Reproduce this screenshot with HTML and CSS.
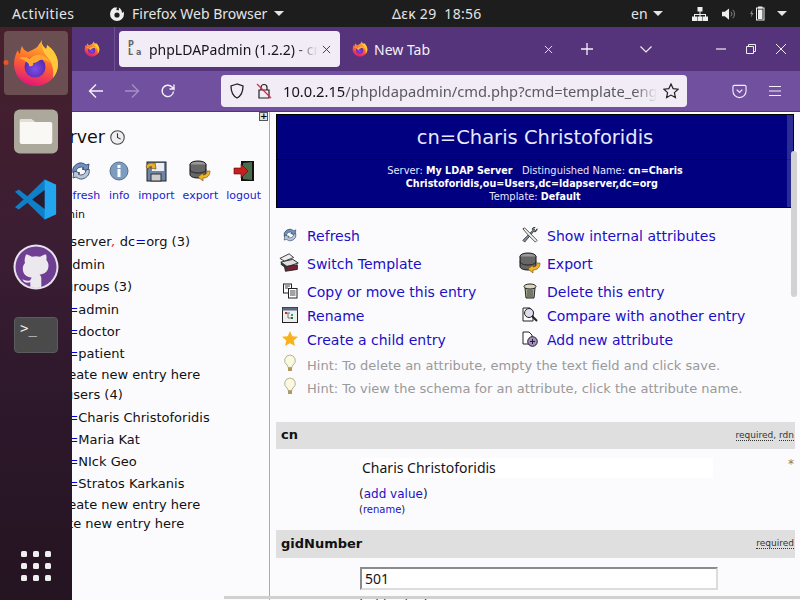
FILE: index.html
```html
<!DOCTYPE html>
<html lang="en">
<head>
<meta charset="utf-8">
<title>phpLDAPadmin</title>
<link rel="stylesheet" href="styles.css">
</head>
<body>
<header class="topbar">
  <span class="activities">Activities</span>
  <span class="appmenu">
    <svg class="app-ico" viewBox="0 0 16 16"><path d="M8 1a7 7 0 1 0 7 7c0-1-.3-2-.7-2.800-.2 1-.7 1.500-1.300 1.800.1-2-.8-4.500-3.500-5.500.8 1.200.6 2.300 0 3a3 3 0 0 0-2.500-.2c.8-.9 1-1.800.5-3.300z" fill="#eee"/><circle cx="8" cy="9" r="2.600" fill="#1d1d1d"/></svg>
    Firefox Web Browser <i class="caret"></i>
  </span>
  <span class="clock">Δεκ 29&nbsp;&nbsp;18:56</span>
  <span class="status">
    <span class="lang">en <i class="caret"></i></span>
    <svg class="st-net" viewBox="0 0 16 14"><path d="M5.500 0h5v4.500h-5zM0 9.500h5V14H0zM5.500 9.500h5V14h-5zM11 9.500h5V14h-5zM7.500 4.500h1V7H14v2.500h-1V8H8.500v1.500h-1V8H3v1.500H2V7h5.500z" fill="#eee"/></svg>
    <svg class="st-vol" viewBox="0 0 16 14"><path d="M0 4.500h3L7.500 1v12L3 9.500H0z" fill="#eee"/><path d="M9.500 4.500a3.500 3.500 0 0 1 0 5M11.500 2.500a6.500 6.500 0 0 1 0 9" stroke="#888" fill="none"/></svg>
    <svg class="st-bat" viewBox="0 0 16 14"><path d="M2.500 3 0 7.500h1.500L1 11l2.500-4.500H2z" fill="#888"/><rect x="6.500" y="1.500" width="7.500" height="12" fill="none" stroke="#eee"/><rect x="8" y="0" width="4.500" height="2" fill="#eee"/><rect x="8" y="3" width="4.500" height="9.500" fill="#eee"/></svg>
    <i class="caret caret-end"></i>
  </span>
</header>

<div class="desktop">
  <nav class="dock">
    <div class="dock-item active">
      <i class="run-dot"></i>
      <svg class="fx-big" viewBox="0 0 48 48"><use href="#fx"/></svg>
    </div>
    <div class="dock-item">
      <svg class="files-ico" viewBox="0 0 46 46"><rect width="46" height="46" rx="6" fill="#aca89b"/><path d="M6 12a2 2 0 0 1 2-2h10l4 3h16a2 2 0 0 1 2 2v19a2 2 0 0 1-2 2H8a2 2 0 0 1-2-2z" fill="#f9f8f4"/><path d="M6 12a2 2 0 0 1 2-2h10l4 3H6z" fill="#e1dfd6"/></svg>
    </div>
    <div class="dock-item">
      <svg class="code-ico" viewBox="0 0 46 44"><path d="M32 1 44 6.500v31L32 43 14 25.500 5 32.500 1 30l9-8-9-8 4-2.500 9 7z" fill="#0f7fc8"/><path d="M32 1 44 6.500v31L32 43z" fill="#22a6f0"/><path d="M32 12v20L19 22z" fill="#2b1a2e"/></svg>
    </div>
    <div class="dock-item">
      <svg class="gh-ico" viewBox="0 0 46 46"><circle cx="23" cy="23" r="22.500" fill="#e8e3ea"/><circle cx="23" cy="23" r="20.500" fill="#6e3f92"/><path d="M13 10.500c2 0 4 1 6 2.300a16 16 0 0 1 8 0c2-1.300 4-2.300 6-2.300.7 2 .8 4 .3 5.500 1.500 1.700 2.200 3.500 2.200 5.500 0 6-3.500 8.500-9 9.200 1.300.8 1.800 2 1.800 3.500v9a20 20 0 0 1-11 0v-5c-3.500 1-6.500.5-8-3 1.500.5 3.500 1.500 5 1.500 1 0 2.300 0 3-.5.100-1 .6-1.800 1.500-2.500-5.500-.7-9-3.200-9-9.200 0-2 .7-3.800 2.200-5.500-.5-1.500-.4-3.500 0-5.500z" fill="#ece9ee"/></svg>
    </div>
    <div class="dock-item">
      <div class="term-ico"><span>&gt;_</span></div>
    </div>
    <div class="dock-grid">
      <i></i><i></i><i></i><i></i><i></i><i></i><i></i><i></i><i></i>
    </div>
  </nav>

  <main class="browser">
    <div class="tabbar">
      <div class="pinned"><svg class="fx-small" viewBox="0 0 48 48"><use href="#fx"/></svg></div>
      <div class="tab tab-on">
        <span class="favicon-pla"><b>P</b><b></b><b>L</b><b>a</b></span>
        <span class="tab-title">phpLDAPadmin (1.2.2) - cn=Charis</span>
        <svg class="tab-x" viewBox="0 0 10 10"><path d="M1 1l8 8M9 1l-8 8" stroke="#333" fill="none"/></svg>
      </div>
      <div class="tab tab-off">
        <svg class="fx-small" viewBox="0 0 48 48"><use href="#fx"/></svg>
        <span class="tab-title-off">New Tab</span>
        <svg class="tab-x" viewBox="0 0 10 10"><path d="M1 1l8 8M9 1l-8 8" stroke="#eee" fill="none"/></svg>
      </div>
      <svg class="tb-plus" viewBox="0 0 12 12"><path d="M6 0v12M0 6h12" stroke="#f4f0f8" stroke-width="1.300" fill="none"/></svg>
      <svg class="tb-chev" viewBox="0 0 12 7"><path d="M.5.500 6 6l5.500-5.500" stroke="#eee" stroke-width="1.200" fill="none"/></svg>
      <svg class="wc wc-min" viewBox="0 0 10 10"><path d="M0 5h10" stroke="#eee" stroke-width="1.200"/></svg>
      <svg class="wc wc-max" viewBox="0 0 10 10"><path d="M.5 2.500h7v7h-7zM2.500 2.500V.5h7v7h-2" stroke="#eee" fill="none"/></svg>
      <svg class="wc wc-close" viewBox="0 0 10 10"><path d="M0 0l10 10M10 0 0 10" stroke="#eee"/></svg>
    </div>
    <div class="toolbar">
      <svg class="nav-ico" viewBox="0 0 16 16"><path d="M15 8H1.500M8 1.500 1.500 8 8 14.500" stroke="#f4f0f8" stroke-width="1.400" fill="none"/></svg>
      <svg class="nav-ico nav-dim" viewBox="0 0 16 16"><path d="M1 8h13.500M8 1.500 14.500 8 8 14.500" stroke="#a48ec2" stroke-width="1.400" fill="none"/></svg>
      <svg class="nav-ico" viewBox="0 0 16 16"><path d="M13.500 8.500a5.700 5.700 0 1 1-1.500-4.500l2 2V1.500M14 6h-4.500" stroke="#f4f0f8" stroke-width="1.400" fill="none"/></svg>
      <div class="urlbar">
        <svg class="u-shield" viewBox="0 0 16 16"><path d="M8 1 2 3c0 5 1 9.500 6 12 5-2.500 6-7 6-12z" stroke="#222" stroke-width="1.300" fill="none"/></svg>
        <svg class="u-lock" viewBox="0 0 16 16"><path d="M5 7V4.500a3 3 0 0 1 6 0V7M3 7h10v8H3z" stroke="#222" stroke-width="1.200" fill="none"/><path d="M1 1l14 14" stroke="#e22850" stroke-width="1.300"/></svg>
        <span class="url"><span class="url-host">10.0.2.15</span>/phpldapadmin/cmd.php?cmd=template_eng</span>
        <svg class="u-star" viewBox="0 0 16 16"><path d="M8 1l2.100 4.600 5 .6-3.700 3.400 1 5L8 12.100 3.600 14.600l1-5L.9 6.200l5-.6z" stroke="#222" stroke-width="1.200" fill="none"/></svg>
      </div>
      <svg class="tool-pocket" viewBox="0 0 16 16"><path d="M1 3a1.500 1.500 0 0 1 1.500-1.500h11A1.500 1.500 0 0 1 15 3v4.500a7 7 0 0 1-14 0z" stroke="#f4f0f8" stroke-width="1.200" fill="none"/><path d="M5 6l3 3 3-3" stroke="#f4f0f8" stroke-width="1.300" fill="none"/></svg>
      <svg class="tool-menu" viewBox="0 0 12 10"><path d="M0 .5h12M0 5h12M0 9.500h12" stroke="#f4f0f8"/></svg>
    </div>

    <div class="page">
      <aside class="side">
        <span class="plus-btn">+</span>
        <div class="side-inner">
          <div class="srv-title">My LDAP Server
            <svg class="clock-ico" viewBox="0 0 14 14"><circle cx="7" cy="7" r="6.300" fill="#eee" stroke="#444"/><path d="M7 3v4l3 1.500" stroke="#333" fill="none"/></svg>
          </div>
          <div class="srv-tools">
            <a class="st"><svg viewBox="0 0 22 22"><use href="#i-refresh"/></svg>refresh</a>
            <a class="st"><svg viewBox="0 0 22 22"><circle cx="11" cy="11" r="9" fill="#7d9cc0" stroke="#52708f"/><rect x="9.500" y="9" width="3" height="8" fill="#fff"/><rect x="9.500" y="5" width="3" height="3" fill="#fff"/></svg>info</a>
            <a class="st"><svg viewBox="0 0 22 22"><rect x="2" y="2" width="19" height="19" fill="#6d86a8" stroke="#222"/><rect x="7" y="3" width="12" height="8" fill="#eee"/><rect x="6" y="14" width="10" height="7" fill="#ccc" stroke="#333"/><path d="M1 7a5 5 0 0 1 8-3l1-2 1 7-6-1 2-1c-2-1-3 0-4 2z" fill="#e8b030" stroke="#5a4310" stroke-width=".6"/></svg>import</a>
            <a class="st"><svg viewBox="0 0 22 22"><use href="#i-db"/></svg>export</a>
            <a class="st"><svg viewBox="0 0 22 22"><rect x="8" y="1" width="13" height="20" fill="#111"/><path d="M10 3l9-1v18l-9-1z" fill="#4a6b4a"/><path d="M1 8h7V4l7 7-7 7v-4H1z" fill="#c82020" stroke="#500" stroke-width=".6"/></svg>logout</a>
          </div>
          <div class="logged">Logged in as: cn=admin</div>
          <ul class="tree">
            <li class="t0 g0">dc=ldapserver<em>,</em> dc<u>=</u>org (3)</li>
            <li class="t1 g23">cn=admin</li>
            <li class="t1 g22">ou=groups (3)</li>
            <li class="t2 g23">cn<u>=</u>admin</li>
            <li class="t2 g22">cn<u>=</u>doctor</li>
            <li class="t2 g22">cn<u>=</u>patient</li>
            <li class="t2x g21">Create new entry here</li>
            <li class="t1 g20">ou=users (4)</li>
            <li class="t2 g23">cn<u>=</u>Charis Christoforidis</li>
            <li class="t2 g22">cn<u>=</u>Maria Kat</li>
            <li class="t2 g22">cn<u>=</u>NIck Geo</li>
            <li class="t2 g22">cn<u>=</u>Stratos Karkanis</li>
            <li class="t2x g21">Create new entry here</li>
            <li class="t1 g19">Create new entry here</li>
          </ul>
        </div>
      </aside>

      <section class="content">
        <div class="entry-head">
          <h1>cn=Charis Christoforidis</h1>
          <p>Server: <b>My LDAP Server</b> &nbsp; Distinguished Name: <b>cn=Charis Christoforidis,ou=Users,dc=ldapserver,dc=org</b>&nbsp;&nbsp;<br>Template: <b>Default</b></p>
        </div>
        <div class="actions">
          <a class="ac r1"><svg viewBox="0 0 22 22"><use href="#i-refresh"/></svg><span>Refresh</span></a>
          <a class="ac r1"><svg viewBox="0 0 18 18"><path d="M1 15 12 4c-1-2 0-4 3-4l-2 2 2 2 2-2c0 3-2 4-4 3L3 17z" fill="#7f95a8" stroke="#111" stroke-width=".8"/><path d="M1 2l2-1 5 5 9 9-2 2-9-9z" fill="#f4f4f4" stroke="#111" stroke-width=".8"/></svg><span>Show internal attributes</span></a>
          <a class="ac r2"><svg class="big" viewBox="0 0 24 24"><path d="M1 7l10-5 5 4-10 4z" fill="#eee" stroke="#333"/><path d="M2 11l13-3 6 4-12 4z" fill="#ddd" stroke="#222"/><path d="M6 16l14-2v5l-13 2z" fill="#7a1e33" stroke="#222"/><path d="M2 11l7 5v3l-7-5z" fill="#333"/></svg><span>Switch Template</span></a>
          <a class="ac r2"><svg class="big" viewBox="0 0 22 22"><use href="#i-db"/></svg><span>Export</span></a>
          <a class="ac r3"><svg viewBox="0 0 16 16"><rect x="1.500" y="1" width="8" height="9" fill="#fff" stroke="#222"/><rect x="6.500" y="5.500" width="8.500" height="9.500" fill="#fff" stroke="#222"/><path d="M8 8h5.500M8 10h5.500M8 12h5.500M3 3h5M3 5h3" stroke="#444"/></svg><span>Copy or move this entry</span></a>
          <a class="ac r3"><svg viewBox="0 0 16 16"><path d="M3 5h10l-1 10H4z" fill="#a9a98f" stroke="#222"/><ellipse cx="8" cy="3.500" rx="6" ry="2.500" fill="#d8d8c0" stroke="#222"/><path d="M6 7v7M8 7v7M10 7v7" stroke="#444"/></svg><span>Delete this entry</span></a>
          <a class="ac r4"><svg viewBox="0 0 16 16"><rect x=".5" y=".5" width="15" height="15" fill="#eee" stroke="#222"/><rect x=".5" y=".5" width="15" height="3" fill="#5a6a80"/><path d="M4 6h4M6 6v5h3" stroke="#777" fill="none"/><rect x="3" y="5" width="2" height="2" fill="#b33"/><rect x="9" y="7" width="2" height="2" fill="#2a7"/><rect x="9" y="10" width="2" height="2" fill="#272"/></svg><span>Rename</span></a>
          <a class="ac r4"><svg viewBox="0 0 16 16"><path d="M1 1h7l3 3v10H1z" fill="#fff" stroke="#222"/><circle cx="7" cy="6" r="4.500" fill="#dde" stroke="#222"/><path d="M10 9l5 5" stroke="#222" stroke-width="2"/></svg><span>Compare with another entry</span></a>
          <a class="ac r4"><svg viewBox="0 0 16 16"><path d="M8 0l2.300 5.200 5.700.6-4.300 3.700 1.300 5.500L8 12.200 3 15l1.300-5.500L0 5.800l5.700-.6z" fill="#f7b21c"/></svg><span>Create a child entry</span></a>
          <a class="ac r4"><svg viewBox="0 0 16 16"><path d="M1 1h6l3 3v9H1z" fill="#fff" stroke="#222"/><circle cx="10.500" cy="10.500" r="4.800" fill="#a48fc0" stroke="#222"/><path d="M8 10.500h5M10.500 8v5" stroke="#222"/></svg><span>Add new attribute</span></a>
        </div>
        <div class="hints">
          <div class="hint"><svg viewBox="0 0 16 18"><use href="#i-bulb"/></svg><span>Hint: To delete an attribute, empty the text field and click save.</span></div>
          <div class="hint"><svg viewBox="0 0 16 18"><use href="#i-bulb"/></svg><span>Hint: To view the schema for an attribute, click the attribute name.</span></div>
        </div>

        <div class="attr-head a-cn"><b>cn</b><small><abbr>required</abbr>, <abbr>rdn</abbr></small></div>
        <div class="attr-body b-cn">
          <div class="val-plain">Charis Christoforidis</div><span class="star">*</span>
          <div class="add-val">(<a>add value</a>)</div>
          <div class="ren">(<a>rename</a>)</div>
        </div>
        <div class="attr-head"><b>gidNumber</b><small><abbr>required</abbr></small></div>
        <div class="attr-body b-gid">
          <input class="val-input" value="501">
          <div class="add-val add-gid">(<a>add value</a>)</div>
        </div>
        <div class="vscroll"></div>
      </section>
      <div class="hscroll"></div>
    </div>
  </main>
</div>

<svg class="defs" width="0" height="0">
  <defs>
    <linearGradient id="fxg1" x1=".7" y1="0" x2=".4" y2="1"><stop offset="0" stop-color="#ffc12e"/><stop offset=".5" stop-color="#ff6a2b"/><stop offset="1" stop-color="#e3157a"/></linearGradient>
    <radialGradient id="fxg2" cx=".5" cy=".6"><stop offset="0" stop-color="#7d4fe6"/><stop offset="1" stop-color="#5b2bb5"/></radialGradient>
    <symbol id="fx" viewBox="0 0 48 48">
      <path d="M30 1c-1 4 1 6 4 9 1-1 1-3 1-4 7 5 11 12 11 19 0 12-10 22-22 22S2 37 2 25c0-6 2-11 4-14 0 2 1 3 2 4 0-3 1-6 2-8 1 3 3 5 6 6 4-2 9-4 10-6 1-2 3-4 4-6z" fill="url(#fxg1)"/>
      <path d="M30 1c-1 4 1 6 4 9 1-1 1-3 1-4 7 5 11 12 11 19 0 6-2 10-5 14 1-6 0-14-5-20-3-4-7-8-6-18z" fill="#ffc83a"/>
      <circle cx="23" cy="28" r="10.500" fill="url(#fxg2)"/>
      <path d="M7 19c4-2 8-1 10 1 2-2 6-4 10-4 5 0 9 3 11 8-3-3-7-4-10-3-2 1-4 3-7 3 1 2-1 4-4 3 1-3-5-6-10-8z" fill="#ffa930"/>
    </symbol>
    <symbol id="i-refresh" viewBox="0 0 22 22">
      <path d="M3 13a8 8 0 0 1 13-8l3-1-1 7-6-2 2-1a5 5 0 0 0-8 4z" fill="#6f93c0" stroke="#2a3a55" stroke-width=".8"/>
      <path d="M19 9a8 8 0 0 1-13 8l-3 1 1-7 6 2-2 1a5 5 0 0 0 8-4z" fill="#b8c8dc" stroke="#2a3a55" stroke-width=".8"/>
    </symbol>
    <symbol id="i-db" viewBox="0 0 22 22">
      <ellipse cx="9" cy="4.500" rx="8" ry="3.500" fill="#999" stroke="#111"/>
      <path d="M1 4.500v10c0 2 3.500 3.500 8 3.500s8-1.500 8-3.500v-10" fill="#666" stroke="#111"/>
      <path d="M1 9.500c0 2 3.500 3.500 8 3.500s8-1.500 8-3.500" fill="none" stroke="#222"/>
      <path d="M21 11c0 5-3 7-7 7v3l-5-4 5-4v2c3 0 4-2 4-4z" fill="#f0b428" stroke="#6b4c0a" stroke-width=".6"/>
    </symbol>
    <symbol id="i-bulb" viewBox="0 0 16 18">
      <path d="M8 1a5.500 5.500 0 0 0-3 10c.7.7 1 1.500 1 2.500h4c0-1 .3-1.800 1-2.500A5.500 5.500 0 0 0 8 1z" fill="#fbf8e0" stroke="#b5b29a"/>
      <rect x="6" y="13.500" width="4" height="3.500" fill="#b39a5a"/>
    </symbol>
  </defs>
</svg>
</body>
</html>
```

FILE: styles.css
```css
* { box-sizing: border-box; }
html, body { margin: 0; padding: 0; width: 800px; height: 600px; overflow: hidden; }
body { font-family: "DejaVu Sans", sans-serif; background: #1d1d1d; display: flex; flex-direction: column; }
.defs { position: absolute; }

/* GNOME top bar */
.topbar { height: 27px; flex: none; background: #1d1d1d; color: #e4e4e4; font-family: "Noto Sans", sans-serif; font-size: 14px; display: flex; align-items: center; padding-left: 12px; }
.activities { width: 97px; letter-spacing: .4px; }
.appmenu { display: flex; align-items: center; gap: 7px; width: 283px; }
.app-ico { width: 16px; height: 16px; margin-right: 0; }
.clock { width: 239px; letter-spacing: .3px; }
.status { display: flex; align-items: center; }
.lang { width: 61px; display: flex; align-items: center; gap: 5px; }
.caret { display: inline-block; width: 0; height: 0; border-left: 5px solid transparent; border-right: 5px solid transparent; border-top: 5px solid #e4e4e4; }
.st-net { width: 16px; height: 14px; margin-right: 14px; }
.st-vol { width: 15px; height: 14px; margin-right: 13px; }
.st-bat { width: 16px; height: 15px; margin-right: 11px; }

.desktop { flex: 1; min-height: 0; display: flex; }

/* Dock */
.dock { width: 72px; flex: none; background: linear-gradient(#47202c 0, #3a1d33 40%, #2b1729 70%, #251421 100%); display: flex; flex-direction: column; align-items: center; padding-top: 4px; }
.dock-item { width: 64px; height: 64px; display: flex; align-items: center; justify-content: center; position: relative; margin-bottom: 4px; border-radius: 4px; }
.dock-item.active { background: #6b4e52; }
.run-dot { position: absolute; left: 0; top: 29px; width: 5px; height: 5px; border-radius: 50%; background: #e95420; transform: translateX(-0.500px); }
.fx-big { width: 48px; height: 48px; }
.files-ico { width: 44px; height: 45px; }
.code-ico { width: 44px; height: 43px; }
.gh-ico { width: 46px; height: 46px; }
.term-ico { width: 44px; height: 36px; background: #4a4a4a; border: 1px solid #5c5c5c; border-radius: 4px; color: #eee; font: 14px/1 "DejaVu Sans Mono", monospace; padding: 3px 5px; }
.dock-grid { margin-top: auto; margin-bottom: 19px; display: grid; grid-template-columns: repeat(3, 6px); gap: 6px; }
.dock-grid i { width: 6px; height: 6px; border-radius: 1.500px; background: #efefef; }

/* Firefox chrome */
.browser { flex: 1; min-width: 0; display: flex; flex-direction: column; }
.tabbar { height: 44px; flex: none; background: #55347b; display: flex; align-items: center; color: #f4f0f8; font-family: "Noto Sans", sans-serif; font-size: 14px; }
.pinned { width: 43px; height: 100%; display: flex; align-items: center; justify-content: center; border-right: 1px solid #6e5192; margin-right: 4px; padding-right: 2px; }
.fx-small { width: 16px; height: 16px; flex: none; }
.tab { height: 36px; display: flex; align-items: center; }
.tab-on { width: 221px; background: #f1ecf5; border-radius: 4px; color: #15141a; padding: 0 9px; margin-right: 12px; }
.favicon-pla { width: 16px; height: 16px; display: grid; grid-template-columns: 8px 8px; font: 700 8px/8px "DejaVu Sans", sans-serif; color: #666; margin-right: 5px; flex: none; }
.tab-title { flex: 1; white-space: nowrap; overflow: hidden; -webkit-mask-image: linear-gradient(90deg, #000 85%, transparent); mask-image: linear-gradient(90deg, #000 85%, transparent); }
.tab-x { width: 9px; height: 9px; flex: none; margin-left: 4px; }
.tab-off { width: 201px; gap: 6px; }
.tab-title-off { flex: 1; white-space: nowrap; }
.tb-plus { width: 12px; height: 12px; margin-left: 28px; }
.tb-chev { width: 12px; height: 7px; margin-left: 47px; }
.wc { width: 10px; height: 10px; }
.wc-min { margin-left: 64px; }
.wc-max { margin-left: 20px; }
.wc-close { margin-left: 20px; }

.toolbar { height: 41px; flex: none; background: #7150a0; border-bottom: 1px solid #53347a; display: flex; align-items: center; padding-left: 16px; }
.nav-ico { width: 16px; height: 16px; margin-right: 20px; flex: none; }
.urlbar { width: 466px; height: 32px; margin-left: 25px; background: #f1ecf5; border-radius: 4px; display: flex; align-items: center; padding: 0 8px; color: #15141a; font-family: "Noto Sans", sans-serif; font-size: 14.700px; flex: none; }
.u-shield { width: 16px; height: 16px; flex: none; }
.u-lock { width: 16px; height: 16px; flex: none; margin-left: 11px; }
.url { flex: 1; margin-left: 11px; white-space: nowrap; overflow: hidden; color: #5b5a60; -webkit-mask-image: linear-gradient(90deg, #000 94%, transparent); mask-image: linear-gradient(90deg, #000 94%, transparent); }
.url-host { color: #15141a; }
.u-star { width: 16px; height: 16px; flex: none; margin-left: 6px; }
.tool-pocket { width: 15px; height: 15px; margin-left: 45px; flex: none; }
.tool-menu { width: 12px; height: 10px; margin-left: 22px; flex: none; }

/* Page */
.page { flex: 1; min-height: 0; display: flex; background: #fbfbfe; color: #15141a; position: relative; overflow: hidden; }
.side { width: 198px; flex: none; position: relative; overflow: hidden; border-right: 1px solid #aaa5c8; }
.plus-btn { position: absolute; top: 0; right: 1px; width: 9px; height: 9px; background: #ddd; border: 1px solid #555; font: 700 9px/6px "DejaVu Sans", sans-serif; text-align: center; color: #000; }
.side-inner { margin-left: -72px; width: 270px; padding-top: 14px; font-size: 13px; white-space: nowrap; color: #111; }
.srv-title { font-size: 17.500px; line-height: 22px; padding-right: 145px; display: flex; justify-content: flex-end; align-items: center; gap: 5px; }
.clock-ico { width: 15px; height: 15px; flex: none; }
.srv-tools { display: flex; justify-content: flex-end; margin-top: 12px; padding-right: 9px; gap: 8px; }
.st { display: flex; flex-direction: column; align-items: center; color: #2222cc; font-size: 11px; line-height: 14px; gap: 7px; }
.st svg { width: 22px; height: 22px; }
.logged { font-size: 11px; line-height: 14px; margin-top: 5px; padding-right: 185px; display: flex; justify-content: flex-end; }
.tree { list-style: none; margin: 12px 0 0; padding: 0; font-size: 13px; line-height: 16px; }
.tree u { text-decoration: none; color: #0000dd; }
.tree em { color: #e22; }
.tree li { height: 16px; }
.t0 { padding-left: 16px; }
.t1 { padding-left: 38px; }
.t2 { padding-left: 52px; }
.t2x { padding-left: 54px; }
.g0 { margin-top: 0; }
.g19 { margin-top: 3px; }
.g20 { margin-top: 4px; }
.g21 { margin-top: 5px; }
.g22 { margin-top: 6px; }
.g23 { margin-top: 7px; }

/* Content */
.content { flex: 1; min-width: 0; position: relative; padding: 2px 0 0 6px; overflow: hidden; }
.entry-head { background: #000080; border: 1px solid #000; color: #e8e8ff; text-align: center; margin-right: 6px; position: relative; height: 94px; }
.entry-head::after { content: ""; position: absolute; top: 0; bottom: 0; right: 0; width: 6px; background: rgba(255, 255, 255, .17); }
.entry-head h1 { margin: 0; font-weight: 400; font-size: 19.500px; line-height: 42px; padding-top: 2px; border-bottom: 1px solid #000; }
.entry-head p { margin: 0; font-size: 9.900px; line-height: 13px; padding: 4px 60px 0; }
.entry-head b { color: #fff; font-size: 9.600px; }
.actions { display: grid; grid-template-columns: 240px 1fr; padding: 16px 0 0 6px; }
.ac { display: flex; align-items: center; color: #1c0fc4; font-size: 14px; height: 24px; }
.ac svg { width: 16px; height: 16px; margin-right: 9px; flex: none; margin-bottom: 3px; }
.ac svg.big { width: 22px; height: 22px; margin-left: -3px; margin-right: 6px; }
.ac.r2 { height: 32px; }
.hints { padding-top: 2px; }
.hint { display: flex; align-items: center; gap: 9px; font-size: 13px; color: #999; height: 23px; padding-left: 6px; }
.hint svg { width: 16px; height: 18px; flex: none; margin-bottom: 6px; }
.attr-head { height: 28px; background: #dfdfdf; display: flex; align-items: center; justify-content: space-between; padding: 0 1px 2px 5px; margin-right: 5px; font-size: 13px; color: #111; }
.a-cn { margin-top: 22px; height: 27px; }
.attr-head small { font-size: 9px; color: #333; }
.attr-head abbr { border-bottom: 1px dotted #333; }
.attr-body { position: relative; padding-left: 84px; }
.b-cn { height: 81px; padding-top: 9px; }
.val-plain { width: 353px; height: 20px; background: #fff; font-family: "Noto Sans", sans-serif; font-size: 14px; line-height: 20px; padding-left: 2px; }
.star { position: absolute; top: 8px; right: 6px; font-size: 12px; color: #8a7a60; }
.add-val { font-size: 12px; line-height: 16px; margin-top: 8px; margin-left: -1px; }
.add-val a, .ren a { color: #1c0fc4; }
.add-gid { margin-top: 5px; }
.ren { font-size: 10px; line-height: 14px; margin-top: 1px; margin-left: -1px; }
.b-gid { padding-top: 9px; }
.val-input { display: block; width: 358px; height: 23px; border: 2px solid; border-color: #8c8c8c #dcdcdc #dcdcdc #8c8c8c; background: #fff; font-family: "Noto Sans", sans-serif; font-size: 14px; padding: 0 3px; color: #15141a; }
.vscroll { position: absolute; right: 3px; top: 39px; width: 6px; height: 146px; background: #d2d2d2; border-radius: 3px; }
.hscroll { position: absolute; left: 152px; right: 0; bottom: 1px; height: 3px; background: #d0d0d0; }
```
